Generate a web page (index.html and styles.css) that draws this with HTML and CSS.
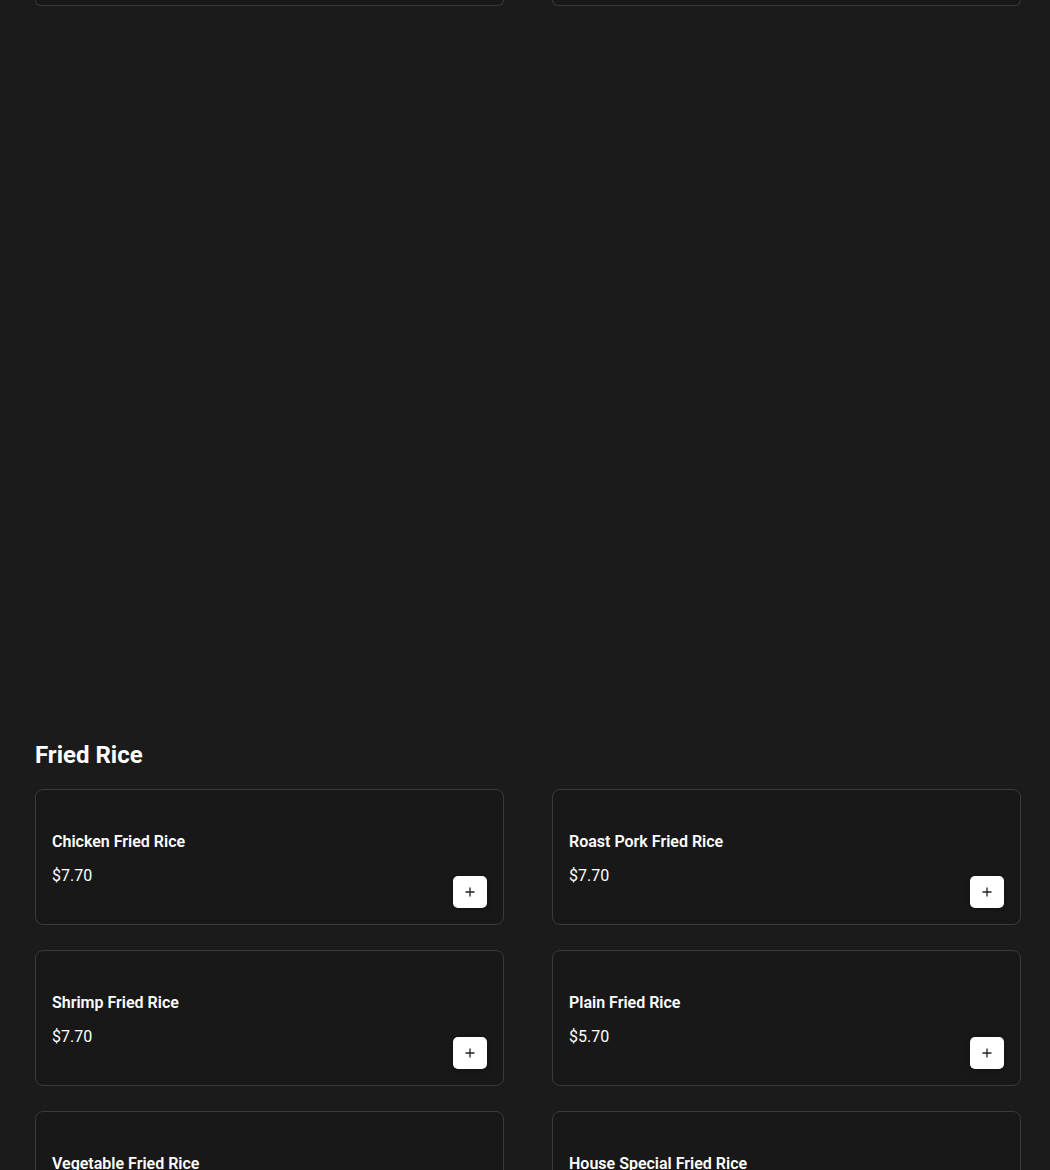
FILE: index.html
```html
<!DOCTYPE html>
<html lang="en">
<head>
<meta charset="utf-8">
<title>Menu</title>
<link rel="stylesheet" href="styles.css">
</head>
<body>
<div class="page">
  <div class="grid stubs">
    <div class="stub"></div>
    <div class="stub"></div>
  </div>

  <section class="section">
    <h2 class="section-title">Fried Rice</h2>
    <div class="grid items">
      <div class="card">
        <div class="info">
          <div class="name">Chicken Fried Rice</div>
          <div class="price">$7.70</div>
        </div>
        <button class="add" aria-label="Add"><svg viewBox="0 0 12 12" width="12" height="12"><path d="M6 1.5v9M1.5 6h9" stroke="#222" stroke-width="1.3" fill="none"/></svg></button>
      </div>
      <div class="card">
        <div class="info">
          <div class="name">Roast Pork Fried Rice</div>
          <div class="price">$7.70</div>
        </div>
        <button class="add" aria-label="Add"><svg viewBox="0 0 12 12" width="12" height="12"><path d="M6 1.5v9M1.5 6h9" stroke="#222" stroke-width="1.3" fill="none"/></svg></button>
      </div>
      <div class="card">
        <div class="info">
          <div class="name">Shrimp Fried Rice</div>
          <div class="price">$7.70</div>
        </div>
        <button class="add" aria-label="Add"><svg viewBox="0 0 12 12" width="12" height="12"><path d="M6 1.5v9M1.5 6h9" stroke="#222" stroke-width="1.3" fill="none"/></svg></button>
      </div>
      <div class="card">
        <div class="info">
          <div class="name">Plain Fried Rice</div>
          <div class="price">$5.70</div>
        </div>
        <button class="add" aria-label="Add"><svg viewBox="0 0 12 12" width="12" height="12"><path d="M6 1.5v9M1.5 6h9" stroke="#222" stroke-width="1.3" fill="none"/></svg></button>
      </div>
      <div class="card">
        <div class="info">
          <div class="name">Vegetable Fried Rice</div>
          <div class="price">$7.70</div>
        </div>
        <button class="add" aria-label="Add"><svg viewBox="0 0 12 12" width="12" height="12"><path d="M6 1.5v9M1.5 6h9" stroke="#222" stroke-width="1.3" fill="none"/></svg></button>
      </div>
      <div class="card">
        <div class="info">
          <div class="name">House Special Fried Rice</div>
          <div class="price">$8.70</div>
        </div>
        <button class="add" aria-label="Add"><svg viewBox="0 0 12 12" width="12" height="12"><path d="M6 1.5v9M1.5 6h9" stroke="#222" stroke-width="1.3" fill="none"/></svg></button>
      </div>
    </div>
  </section>
</div>
</body>
</html>
```
FILE: styles.css
```css
html, body {
  margin: 0;
  padding: 0;
  background: #1b1b1b;
  color: #ffffff;
  font-family: Roboto, "Liberation Sans", Arial, sans-serif;
}

.page {
  padding: 0 30px 0 35px;
}

.grid {
  display: grid;
  grid-template-columns: 469px 469px;
  column-gap: 48px;
}

.stub {
  height: 5px;
  background: #181818;
  border: 1px solid #3a3a3a;
  border-top: none;
  border-radius: 0 0 8px 8px;
}

.section {
  margin-top: 733px;
}

.section-title {
  margin: 0 0 18px;
  font-size: 24px;
  line-height: 32px;
  font-weight: 700;
}

.items {
  row-gap: 25px;
}

.card {
  display: flex;
  justify-content: space-between;
  align-items: flex-end;
  height: 136px;
  box-sizing: border-box;
  padding: 16px 16px 16px 16px;
  background: #181818;
  border: 1px solid #3a3a3a;
  border-radius: 8px;
}

.info {
  align-self: stretch;
  padding-top: 25px;
}

.name {
  font-size: 16px;
  line-height: 22px;
  font-weight: 600;
}

.price {
  margin-top: 12px;
  font-size: 16px;
  line-height: 22px;
  font-weight: 400;
}

.add {
  width: 34px;
  height: 32px;
  padding: 0;
  display: flex;
  align-items: center;
  justify-content: center;
  background: #ffffff;
  border: none;
  border-radius: 5px;
  box-shadow: 0 1px 4px rgba(0, 0, 0, 0.4);
  cursor: pointer;
}
```
